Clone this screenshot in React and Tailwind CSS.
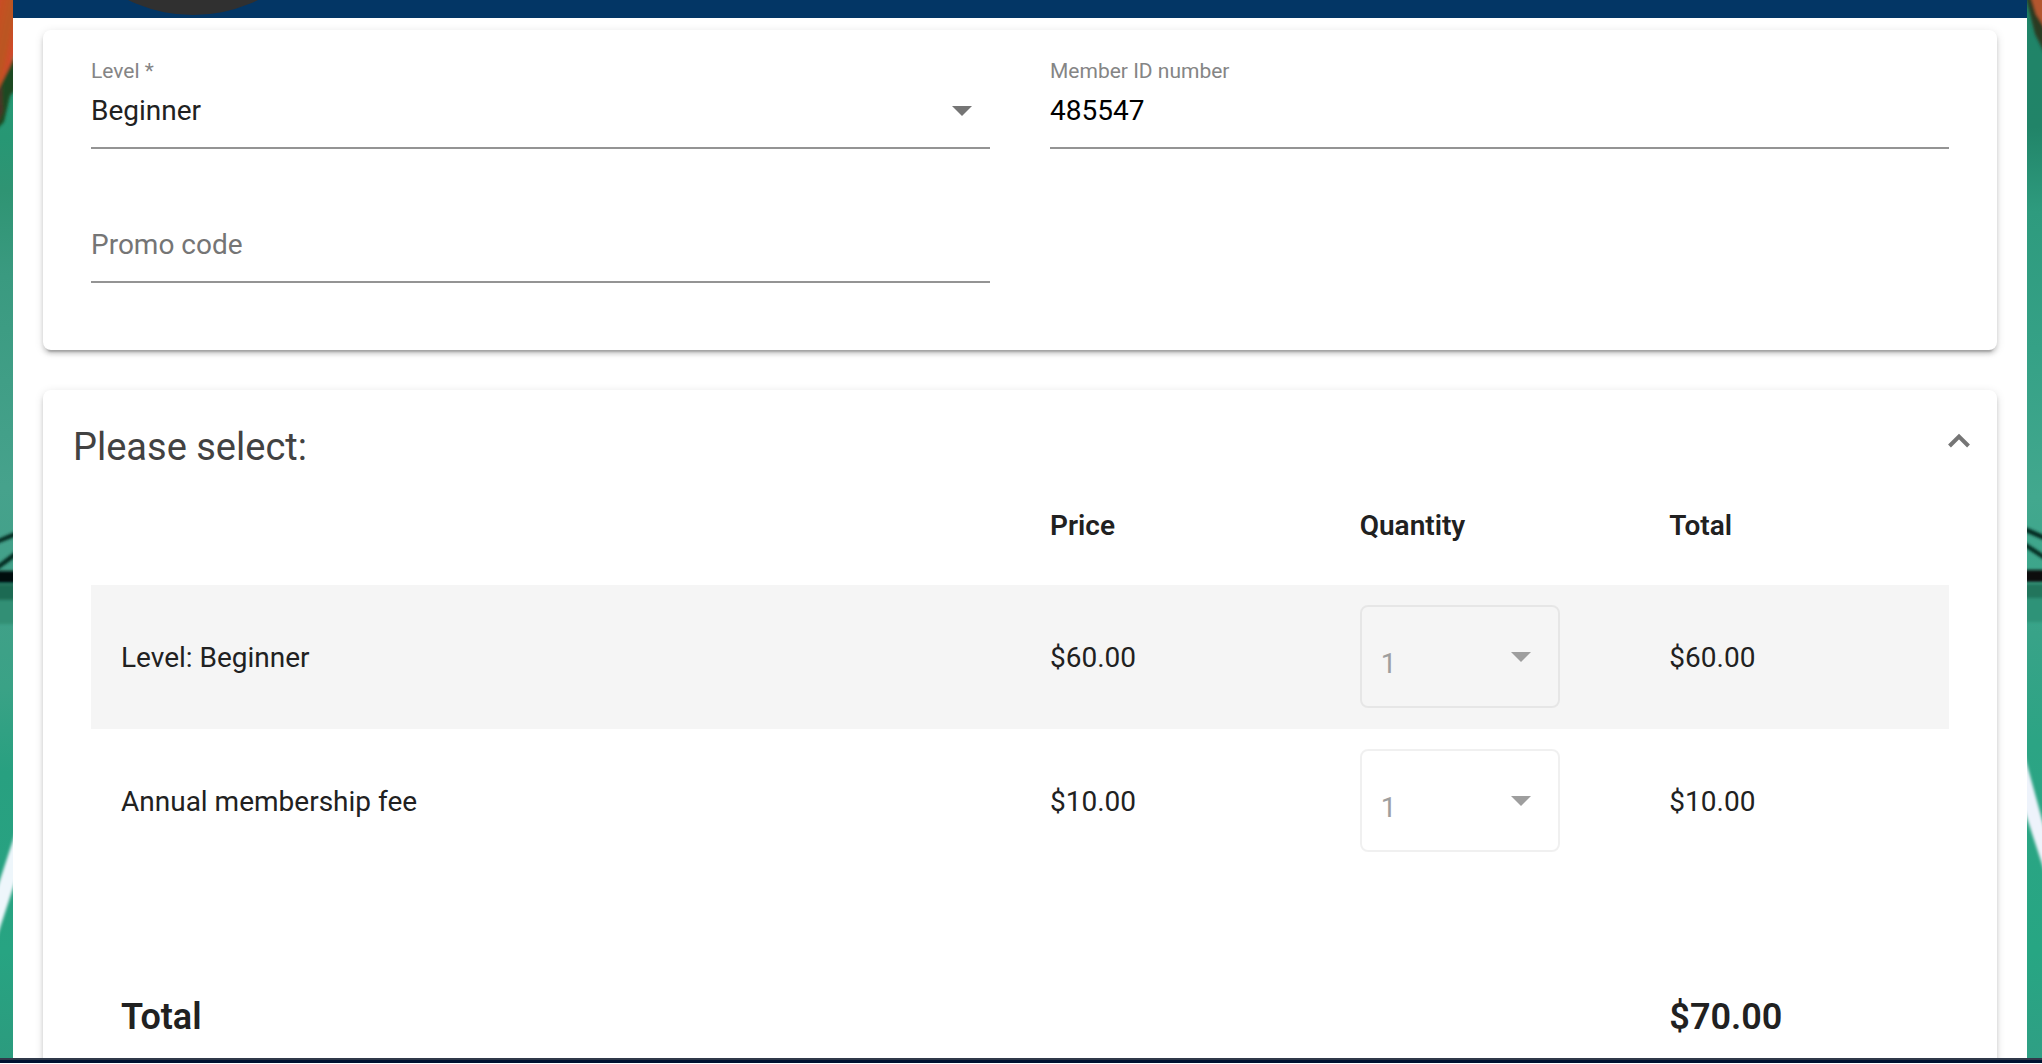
import { useState } from "react";

const cardStyle =
  "bg-white rounded-lg shadow-[0_6px_2px_-4px_rgba(0,0,0,0.2),0_4px_4px_0_rgba(0,0,0,0.14),0_2px_10px_0_rgba(0,0,0,0.12)]";

const items = [
  { id: "level", name: "Level: Beginner", price: "$60.00", quantity: 1, total: "$60.00" },
  { id: "fee", name: "Annual membership fee", price: "$10.00", quantity: 1, total: "$10.00" },
];

function Arrow({ className }) {
  return (
    <svg className={className} width="20" height="10" viewBox="0 0 20 10" aria-hidden="true">
      <path d="M0 0H20L10 10Z" fill="currentColor" />
    </svg>
  );
}

// Visible edges of the court photo behind the page
function LeftBackdrop() {
  return (
    <svg className="w-[13px] h-full shrink-0" viewBox="0 0 13 1058" preserveAspectRatio="none" aria-hidden="true">
      <defs>
        <linearGradient id="left-green" x1="0" y1="0" x2="0" y2="1">
          <stop offset="0" stopColor="#27a078" />
          <stop offset="0.13" stopColor="#279774" />
          <stop offset="0.18" stopColor="#2f9473" />
          <stop offset="0.26" stopColor="#3a9a80" />
          <stop offset="0.46" stopColor="#46a28c" />
          <stop offset="0.58" stopColor="#40a088" />
          <stop offset="0.65" stopColor="#3aa286" />
          <stop offset="0.73" stopColor="#28a080" />
          <stop offset="0.9" stopColor="#27a482" />
          <stop offset="1" stopColor="#2c9b7e" />
        </linearGradient>
        <linearGradient id="left-orange" x1="0" y1="0" x2="1" y2="1">
          <stop offset="0" stopColor="#cf4a28" />
          <stop offset="0.45" stopColor="#b9561f" />
          <stop offset="0.7" stopColor="#d4482c" />
          <stop offset="1" stopColor="#b8503a" />
        </linearGradient>
        <filter id="left-soft" x="-20%" y="-5%" width="140%" height="110%">
          <feGaussianBlur stdDeviation="1.6" />
        </filter>
      </defs>
      <rect width="13" height="1058" fill="url(#left-green)" />
      <g filter="url(#left-soft)">
        <path d="M-4 60H17V88L10 96L4 122L-4 130Z" fill="#1d4a22" />
        <path d="M-4 -6H17V50L9 68L-4 94Z" fill="url(#left-orange)" />
        <path d="M-4 94L2 84L3 112L-4 128Z" fill="#4a3526" />
        <path d="M-4 540L17 531V536L-4 544Z" fill="#06251c" />
        <path d="M-4 566L17 550V556L-4 571Z" fill="#06251c" />
        <rect x="-4" y="571" width="21" height="12" fill="#050b0b" />
        <rect x="-4" y="584" width="21" height="16" fill="#1f6b53" />
        <rect x="-4" y="600" width="21" height="24" fill="#318f75" />
        <path d="M17 828V876L-4 940V892Z" fill="#eef6fb" />
      </g>
    </svg>
  );
}

function RightBackdrop() {
  return (
    <svg className="w-[15px] h-full shrink-0" viewBox="0 0 15 1058" preserveAspectRatio="none" aria-hidden="true">
      <defs>
        <linearGradient id="right-green" x1="0" y1="0" x2="0" y2="1">
          <stop offset="0" stopColor="#1f8468" />
          <stop offset="0.12" stopColor="#218468" />
          <stop offset="0.2" stopColor="#2e9b7e" />
          <stop offset="0.33" stopColor="#35a186" />
          <stop offset="0.47" stopColor="#42a88e" />
          <stop offset="0.6" stopColor="#38a388" />
          <stop offset="0.7" stopColor="#2ca484" />
          <stop offset="0.9" stopColor="#27a683" />
          <stop offset="1" stopColor="#2f9f84" />
        </linearGradient>
        <filter id="right-soft" x="-20%" y="-5%" width="140%" height="110%">
          <feGaussianBlur stdDeviation="1.6" />
        </filter>
      </defs>
      <rect width="15" height="1058" fill="url(#right-green)" />
      <g filter="url(#right-soft)">
        <path d="M-2 -6H19V56L8 34Z" fill="#2b3a22" />
        <path d="M3 -6H19V30L9 14Z" fill="#b4562f" />
        <path d="M-4 526L19 536V541L-4 531Z" fill="#05251c" />
        <path d="M-4 541L19 556V561L-4 546Z" fill="#05251c" />
        <rect x="-4" y="570" width="23" height="12" fill="#0a0b10" />
        <rect x="-4" y="584" width="23" height="14" fill="#23745b" />
        <rect x="-4" y="598" width="23" height="24" fill="#2f9378" />
        <path d="M-4 750L19 834V876L-4 806Z" fill="#eef3fb" />
      </g>
    </svg>
  );
}

function Field({ id, label, children }) {
  return (
    <div className="border-b-2 border-[#949494] pb-2">
      <label htmlFor={id} className="block h-6 text-[21px] leading-6 text-[#858585]">
        {label}
      </label>
      {children}
    </div>
  );
}

function QuantitySelect({ item }) {
  return (
    <div className="relative w-[200px] max-w-full text-[#9e9e9e]">
      <select
        id={`quantity-${item.id}`}
        aria-label={`Quantity, ${item.name}`}
        disabled
        defaultValue={item.quantity}
        className="block w-full h-[103px] appearance-none rounded-lg border-2 border-black/6 bg-transparent pl-[19px] pt-4 opacity-100"
      >
        <option value={1}>1</option>
      </select>
      <Arrow className="absolute right-[29px] top-[47px]" />
    </div>
  );
}

export default function App() {
  const [level, setLevel] = useState("Beginner");
  const [memberId, setMemberId] = useState("485547");
  const [promo, setPromo] = useState("");
  const [open, setOpen] = useState(true);

  return (
    <div className="flex h-screen flex-col overflow-hidden bg-white pb-px font-[Roboto,sans-serif] text-[28px] leading-9 text-[#212121]">
      <div className="flex min-h-0 flex-1">
        <LeftBackdrop />
        <main className="min-w-0 flex-1 overflow-hidden bg-white">
          <header className="h-[18px] overflow-hidden bg-[#033665] pl-8">
            <svg className="h-[18px] w-[296px]" viewBox="0 278 296 18" aria-hidden="true">
              <circle cx="148" cy="145" r="148" fill="#303030" />
            </svg>
          </header>

          <div className="flex flex-col gap-10 px-[30px] pt-3">
            <section className={`${cardStyle} grid grid-cols-2 gap-x-[60px] gap-y-11 px-12 pt-[29px] pb-[67px]`}>
              <Field id="level" label="Level *">
                <div className="relative">
                  <select
                    id="level"
                    value={level}
                    onChange={(e) => setLevel(e.target.value)}
                    className="block h-14 w-full appearance-none bg-transparent outline-none"
                  >
                    <option>Beginner</option>
                    <option>Intermediate</option>
                    <option>Advanced</option>
                  </select>
                  <Arrow className="pointer-events-none absolute right-[18px] top-[23px] text-[#757575]" />
                </div>
              </Field>
              <Field id="member-id" label="Member ID number">
                <input
                  id="member-id"
                  value={memberId}
                  onChange={(e) => setMemberId(e.target.value)}
                  className="block h-14 w-full pb-0.5 text-black outline-none"
                />
              </Field>
              <div className="border-b-2 border-[#949494] pt-6 pb-2">
                <input
                  id="promo"
                  aria-label="Promo code"
                  placeholder="Promo code"
                  value={promo}
                  onChange={(e) => setPromo(e.target.value)}
                  className="block h-14 w-full pb-0.5 outline-none placeholder:text-[#757575]"
                />
              </div>
            </section>

            <section className={cardStyle}>
              <div className="flex items-start justify-between pt-[29px] pr-4 pl-[30px]">
                <h2 className="text-[38px] leading-14 text-[#424242]">Please select:</h2>
                <button
                  type="button"
                  aria-label="Toggle section"
                  aria-expanded={open}
                  onClick={() => setOpen(!open)}
                  className="text-[#757575]"
                >
                  <svg className="size-11" viewBox="0 0 44 44" fill="none" stroke="currentColor" strokeWidth="4">
                    <path d="M12.5 27L22 17.5L31.5 27" />
                  </svg>
                </button>
              </div>

              {open && (
                <div className="px-12">
                  <table className="w-full table-fixed text-left">
                    <thead>
                      <tr className="h-[110px]">
                        <td className="w-1/2" />
                        <th className="w-1/6 px-[30px] pb-2 font-semibold">Price</th>
                        <th className="w-1/6 px-[30px] pb-2 font-semibold">Quantity</th>
                        <th className="w-1/6 px-[30px] pb-2 font-semibold">Total</th>
                      </tr>
                    </thead>
                    <tbody>
                      {items.map((item) => (
                        <tr key={item.id} className="h-36 odd:bg-[#f5f5f5]">
                          <td className="px-[30px] pt-0.5">{item.name}</td>
                          <td className="px-[30px] pt-0.5">{item.price}</td>
                          <td className="px-[30px] pb-0.5">
                            <QuantitySelect item={item} />
                          </td>
                          <td className="px-[30px] pt-0.5">{item.total}</td>
                        </tr>
                      ))}
                    </tbody>
                    <tfoot>
                      <tr className="h-[286px] text-[36px]">
                        <th colSpan={3} className="px-[30px] pt-0.5 font-semibold">Total</th>
                        <td className="px-[30px] pt-0.5 font-semibold">$70.00</td>
                      </tr>
                    </tfoot>
                  </table>
                </div>
              )}
            </section>
          </div>
        </main>
        <RightBackdrop />
      </div>
      <footer className="h-[5px] shrink-0 border-t-2 border-[#30394a] bg-[#001231]" />
    </div>
  );
}
